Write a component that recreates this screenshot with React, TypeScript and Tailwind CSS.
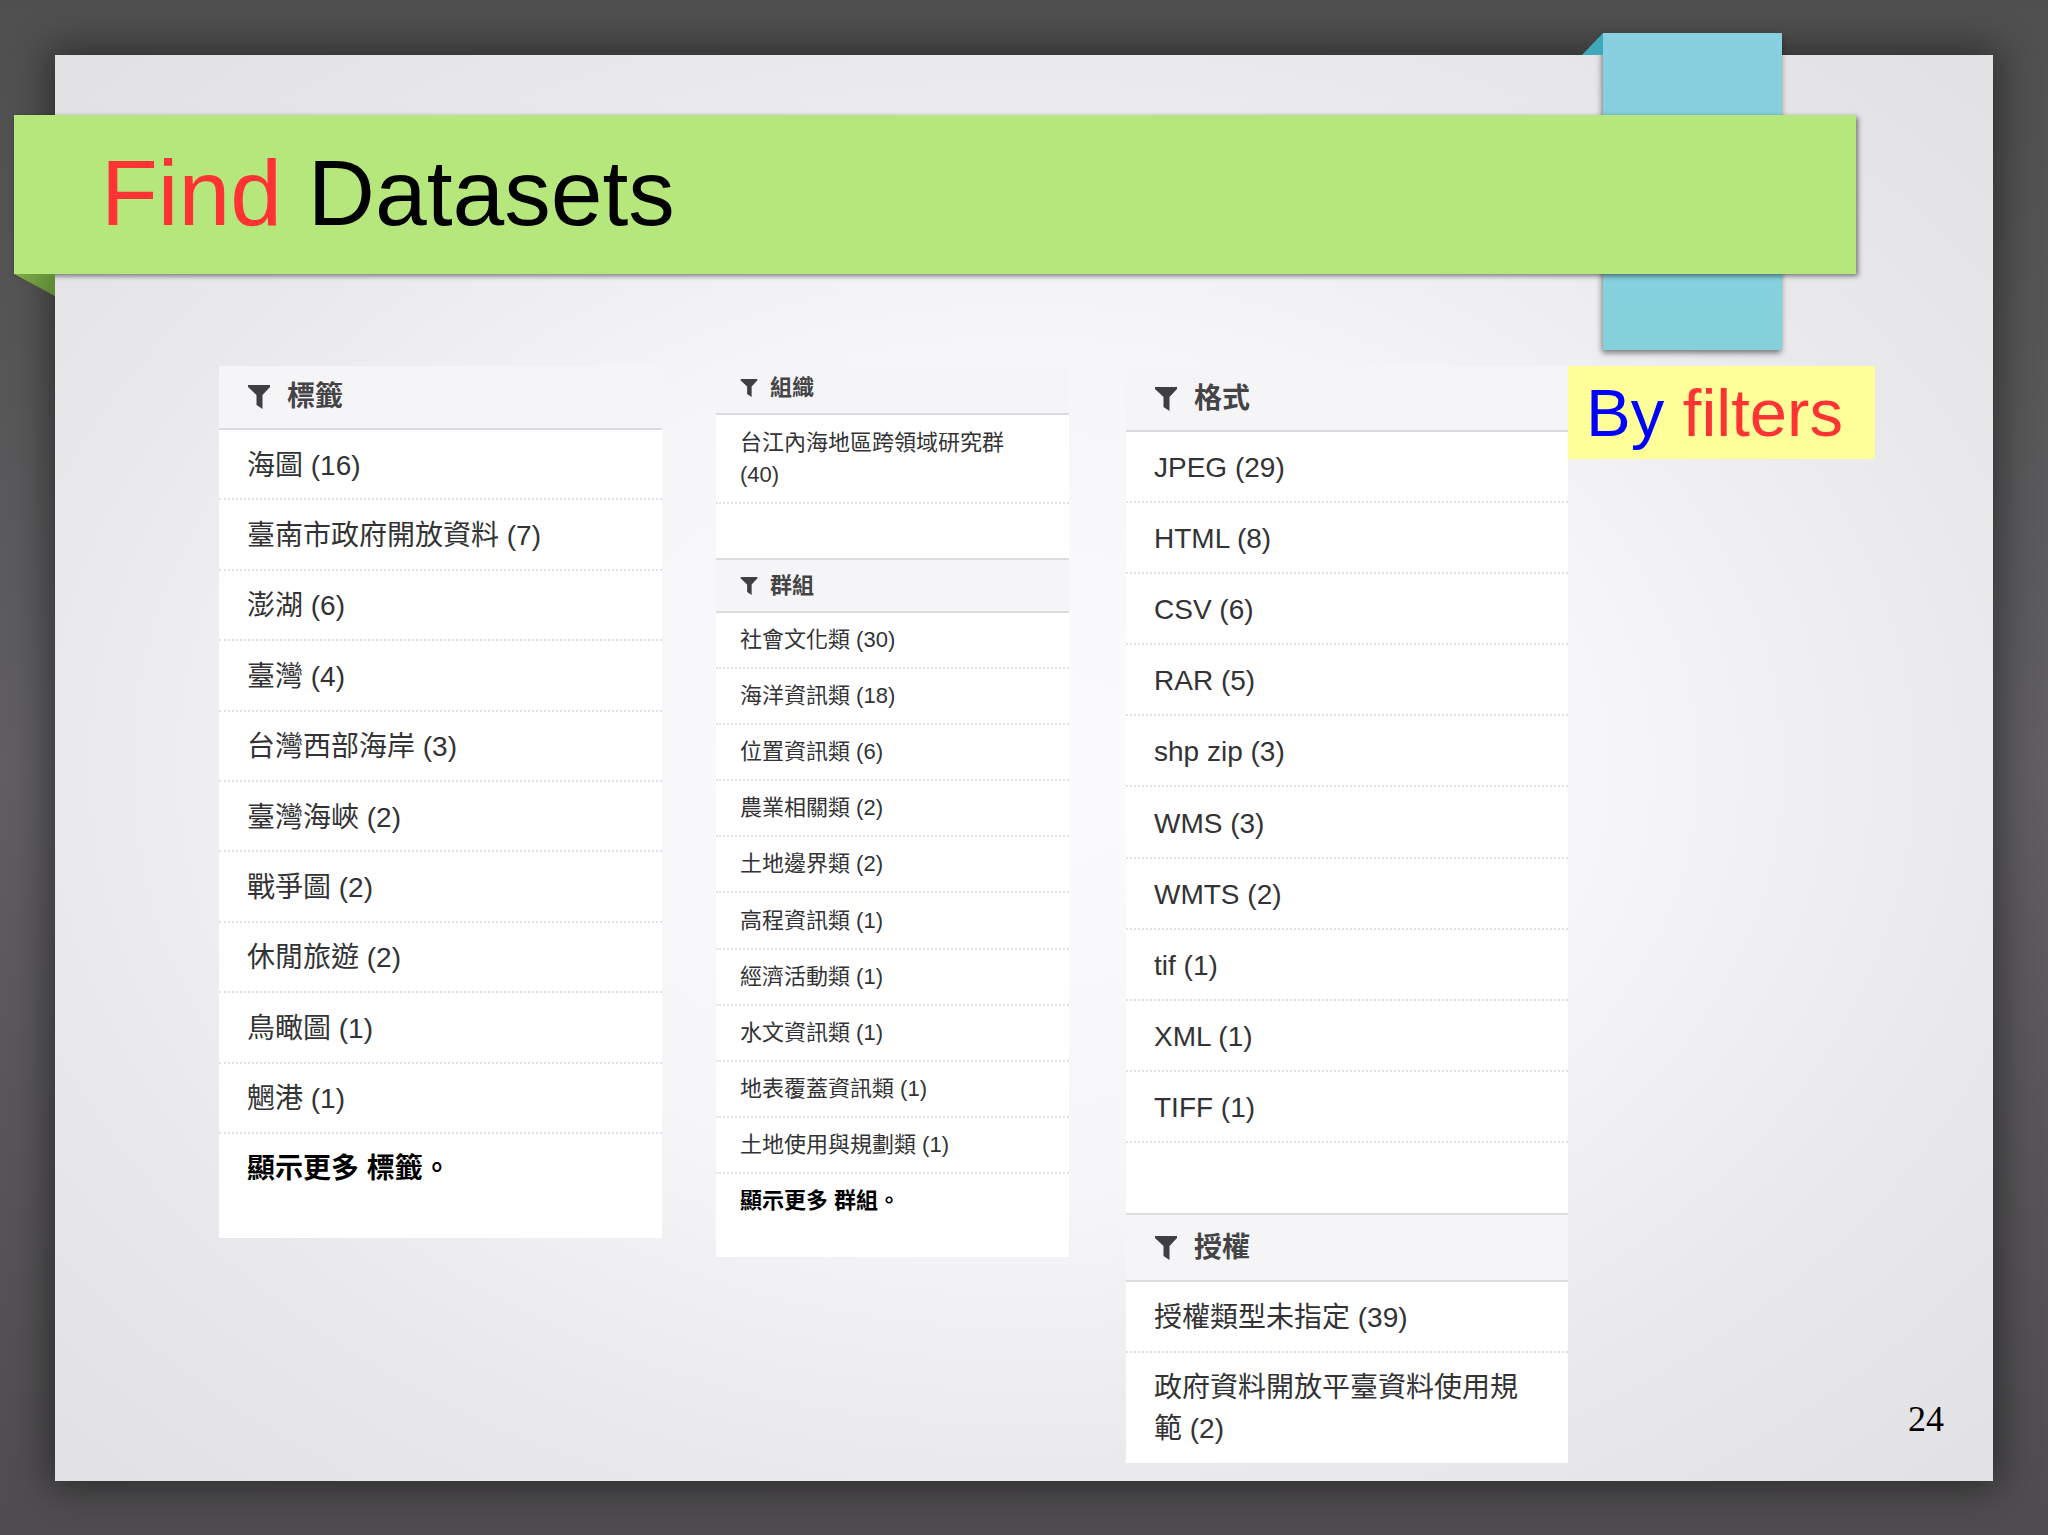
type Size = "lg" | "sm";

const tags = ["海圖 (16)", "臺南市政府開放資料 (7)", "澎湖 (6)", "臺灣 (4)", "台灣西部海岸 (3)", "臺灣海峽 (2)", "戰爭圖 (2)", "休閒旅遊 (2)", "鳥瞰圖 (1)", "魍港 (1)"];
const groups = ["社會文化類 (30)", "海洋資訊類 (18)", "位置資訊類 (6)", "農業相關類 (2)", "土地邊界類 (2)", "高程資訊類 (1)", "經濟活動類 (1)", "水文資訊類 (1)", "地表覆蓋資訊類 (1)", "土地使用與規劃類 (1)"];
const formats = ["JPEG (29)", "HTML (8)", "CSV (6)", "RAR (5)", "shp zip (3)", "WMS (3)", "WMTS (2)", "tif (1)", "XML (1)", "TIFF (1)"];

function Funnel({ size }: { size: Size }) {
  return (
    <svg aria-hidden="true" viewBox="0 0 24 24" className={size === "lg" ? "size-6 shrink-0" : "size-[18px] shrink-0"}>
      <path d="M1 0H23V2L15.500 10V24L9.500 20V10L1 2Z" fill="#3f3f41" />
    </svg>
  );
}

function Header({ title, size, className = "" }: { title: string; size: Size; className?: string }) {
  const scale = size === "lg" ? "gap-4 pl-7 text-[28px] leading-8" : "gap-3 pl-6 text-[22px] leading-7";
  return (
    <h2 className={`flex items-center border-b-2 border-[#dcdbde] bg-[#f5f4f7] font-bold text-[#444446] ${scale} ${className}`}>
      <Funnel size={size} />
      {title}
    </h2>
  );
}

function Rows({ items, size, className = "" }: { items: string[]; size: Size; className?: string }) {
  const scale = size === "lg" ? "px-7 pt-[2px] text-[28px] leading-[41px]" : "px-6 text-[22px] leading-8";
  return (
    <ul className={`grid auto-rows-fr ${className}`}>
      {items.map((item) => (
        <li key={item} className={`flex items-center border-b-2 border-dotted border-[#e2e1e5] ${scale}`}>
          <a href="#">{item}</a>
        </li>
      ))}
    </ul>
  );
}

export default function App() {
  return (
    <div className="min-h-screen bg-linear-to-b from-[#4f4f4f] via-[#605e61] to-[#4e4c4e] px-[55px] pt-[55px] pb-[54px] font-['Liberation_Sans','Noto_Sans_CJK_TC',sans-serif] text-[#333335]">
      <main className="relative flex min-h-[1426px] flex-col bg-[radial-gradient(ellipse_at_50%_50%,#fbfafd_0%,#f6f5f8_42%,#e9e8eb_72%,#e1e0e3_100%)] pt-[60px] shadow-[0_0_36px_6px_rgba(0,0,0,0.45)]">
        <div aria-hidden="true" className="absolute -top-[22px] right-[211px] h-[317px] w-[179px] bg-linear-to-b from-[#88cfe0] to-[#84d1dc] shadow-[-1px_3px_6px_rgba(0,0,0,0.5)]" />
        <svg aria-hidden="true" viewBox="0 0 21 22" className="absolute -top-[22px] right-[390px] h-[22px] w-[21px]">
          <path d="M21 0V22H0Z" fill="#3fa9bb" />
        </svg>
        <header className="relative mr-[137px] -ml-[41px] bg-[#b6e77d] pl-[87px] shadow-[2px_2px_5px_rgba(0,0,0,0.5)]">
          <h1 className="pt-[26px] pb-[29px] text-[93px] leading-[104px] text-black">
            <span className="text-[#ff3333]">Find</span> Datasets
          </h1>
          <svg aria-hidden="true" viewBox="0 0 41 22" className="absolute top-full left-0 h-[22px] w-[41px]">
            <defs>
              <linearGradient id="fold" x1="0" y1="0" x2="1" y2="0.3">
                <stop offset="0" stopColor="#7fae48" />
                <stop offset="1" stopColor="#5f8a36" />
              </linearGradient>
            </defs>
            <path d="M0 0H41V22Z" fill="url(#fold)" />
          </svg>
        </header>

        <div className="mt-[92px] flex items-start pl-[164px]">
          <section className="w-[443px] bg-white">
            <Header title="標籤" size="lg" className="h-[64px]" />
            <Rows items={tags} size="lg" className="min-h-[704px]" />
            <p className="px-7 pt-[14px] pb-[49px] text-[28px] leading-[41px] font-bold text-black">
              <a href="#">顯示更多 標籤。</a>
            </p>
          </section>

          <section className="ml-[54px] w-[353px] bg-white">
            <Header title="組織" size="sm" className="h-[49px] pb-1" />
            <ul>
              <li className="border-b-2 border-dotted border-[#e2e1e5] px-6 pt-3 pb-[11px] text-[22px] leading-8">
                <a href="#">台江內海地區跨領域研究群 (40)</a>
              </li>
            </ul>
            <Header title="群組" size="sm" className="mt-[54px] h-[55px] border-t-2" />
            <Rows items={groups} size="sm" className="min-h-[561px]" />
            <p className="px-6 pt-[11px] pb-[40px] text-[22px] leading-8 font-bold text-black">
              <a href="#">顯示更多 群組。</a>
            </p>
          </section>

          <section className="ml-[57px] w-[442px] bg-white">
            <Header title="格式" size="lg" className="h-[66px] pt-[2px]" />
            <Rows items={formats} size="lg" className="min-h-[711px]" />
            <Header title="授權" size="lg" className="mt-[70px] h-[69px] border-t-2" />
            <ul>
              <li className="flex h-[71px] items-center border-b-2 border-dotted border-[#e2e1e5] px-7 pt-[2px] text-[28px] leading-[41px]">
                <a href="#">授權類型未指定 (39)</a>
              </li>
              <li className="px-7 py-[14px] text-[28px] leading-[41px]">
                <a href="#">政府資料開放平臺資料使用規範 (2)</a>
              </li>
            </ul>
          </section>

          <p className="bg-[#ffff99] pt-[10px] pr-[32px] pb-[9px] pl-[18px] text-[67px] leading-[74px] whitespace-nowrap text-[#ff3333]">
            <span className="text-[#0000ff]">By</span> filters
          </p>
        </div>

        <footer className="absolute right-[49px] bottom-[41px] font-['Liberation_Serif',serif] text-[36px] leading-[42px] text-black">24</footer>
      </main>
    </div>
  );
}
